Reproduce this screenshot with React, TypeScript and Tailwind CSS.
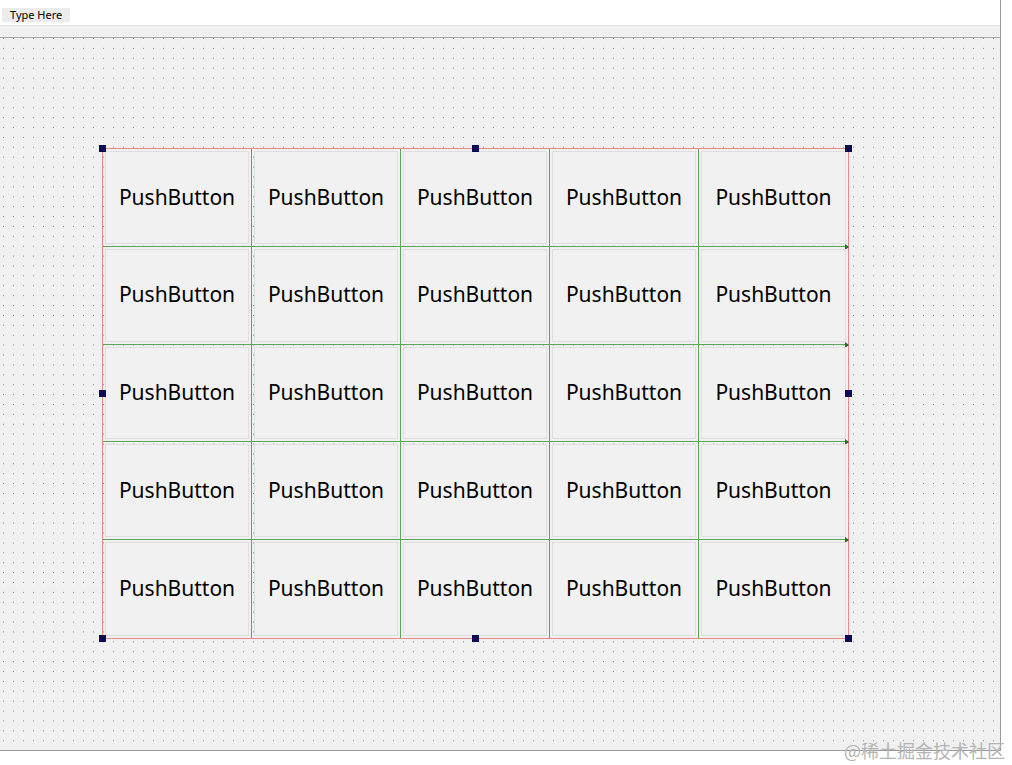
import React from "react";

const rows = [0, 1, 2, 3, 4];
const cols = [0, 1, 2, 3, 4];

function Handle({ className }: { className: string }) {
  return <div className={`absolute w-[7px] h-[7px] bg-[#0b0b55] ${className}`} />;
}

export default function App() {
  return (
    <div
      className="relative w-[1012px] h-[765px] bg-white overflow-hidden"
      style={{ fontFamily: '"Segoe UI", "Noto Sans", "Open Sans", sans-serif' }}
    >
      <div className="w-[1001px] flex flex-col h-[751px] border-r border-[#9a9a9a]">
        {/* menu bar */}
        <div className="h-[25px] flex items-start pt-[8px] pl-[2px]">
          <div className="h-[14px] px-[8px] bg-[#ececec] text-[11px] leading-[14px] text-black">
            Type Here
          </div>
        </div>
        <div className="h-[13px] bg-[#f0f0f0] border-t border-[#e4e4e4] border-b border-b-[#a8a8a8]" />
        {/* canvas */}
        <div className="flex-1 bg-[#f0f0f0] bg-[radial-gradient(circle_at_3.5px_0.5px,#8a8a8a_0.55px,transparent_0.8px)] bg-[size:10px_9.9px] border-b border-[#9a9a9a] pt-[110px] pl-[102px]">
          <div className="relative w-[747px] h-[491px] border border-[#e88a8a]">
            <div className="grid grid-cols-5 grid-rows-5 w-full h-full">
              {rows.map((r) =>
                cols.map((c) => (
                  <div
                    key={`${r}-${c}`}
                    className={`relative p-[2px] ${c < 4 ? "border-r border-r-[#5aa65a]" : ""} ${
                      r < 4 ? "border-b border-b-[#5aa65a]" : ""
                    }`}
                  >
                    <div className="w-full h-full bg-[#f1f1f1] border border-[#dedede] flex items-center justify-center text-[21px] text-black">
                      PushButton
                    </div>
                    {c === 4 && r < 4 && (
                      <div className="absolute right-[-1px] bottom-[-4px] w-0 h-0 border-y-[3.5px] border-y-transparent border-l-[4px] border-l-[#2b6a2b]" />
                    )}
                  </div>
                ))
              )}
            </div>
            <Handle className="left-[-4px] top-[-4px]" />
            <Handle className="left-[369px] top-[-4px]" />
            <Handle className="right-[-4px] top-[-4px]" />
            <Handle className="left-[-4px] top-[241px]" />
            <Handle className="right-[-4px] top-[241px]" />
            <Handle className="left-[-4px] bottom-[-4px]" />
            <Handle className="left-[369px] bottom-[-4px]" />
            <Handle className="right-[-4px] bottom-[-4px]" />
          </div>
        </div>
      </div>
      <div
        className="absolute right-[7px] bottom-[5px] text-[18px] leading-[20px] text-[#b4b4b4]"
        style={{ fontFamily: '"Noto Sans CJK SC", sans-serif' }}
      >
        @稀土掘金技术社区
      </div>
    </div>
  );
}
